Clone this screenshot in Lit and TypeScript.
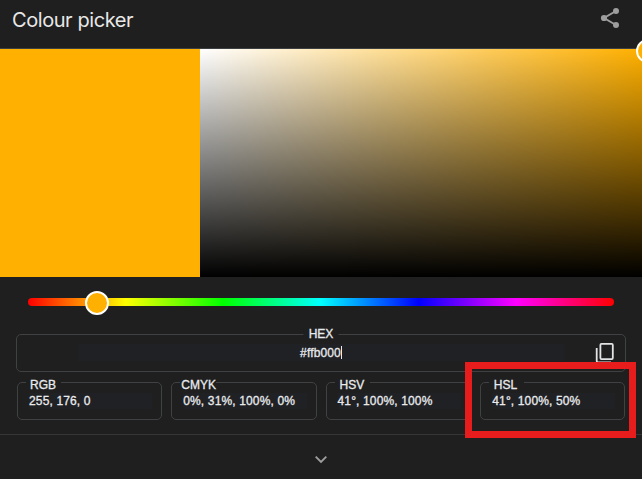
import { LitElement, html, css } from "lit";
import { customElement, property } from "lit/decorators.js";

@customElement("value-field")
class ValueField extends LitElement {
  @property() label = "";
  @property() value = "";

  static styles = css`
    :host {
      display: block;
      position: relative;
      box-sizing: border-box;
      height: 38px;
      border: 1px solid #404142;
      border-radius: 5px;
      padding: 10px 9px 0 11px;
      font: 12px/16px "Liberation Sans", Arial, sans-serif;
      letter-spacing: 0.14px;
      color: #e8eaed;
      -webkit-text-stroke: 0.3px #e8eaed;
    }
    .label {
      position: absolute;
      top: -5px;
      left: 8px;
      height: 14px;
      line-height: 15px;
      padding: 0 4px;
      min-width: 27px;
      background: #1f1f1f;
      letter-spacing: 0;
    }
    .value {
      height: 16px;
      background: #202124;
      white-space: nowrap;
    }
    :host([kind="cmyk"]) .label { padding: 0 0 0 1px; }
    :host([kind="hsl"]) .label { padding-left: 5px; min-width: 26px; }
    :host([kind="hsl"]) .value { text-indent: 0.5px; }
    :host([kind="hsv"]) .label { padding-left: 5px; min-width: 26px; }
    :host([kind="hex"]) { padding: 9px 61px 0; }
    :host([kind="hex"]) .label {
      top: -8px;
      left: 50%;
      transform: translateX(-50%);
      padding: 0 5px;
      min-width: 25px;
      text-align: center;
    }
    :host([kind="hex"]) .value {
      line-height: 18px;
      height: 17px;
      display: flex;
      justify-content: center;
    }
    .caret { display: none; }
    :host([kind="hex"]) .caret {
      display: block;
      width: 1px;
      height: 13px;
      margin-top: 2px;
      background: #e8eaed;
    }
    ::slotted(svg) {
      position: absolute;
      right: 9px;
      top: 7px;
    }
  `;

  render() {
    return html`<div class="value"><span>${this.value}</span><i class="caret"></i></div>
      <span class="label">${this.label}</span>
      <slot></slot>`;
  }
}

const FIELDS = [
  { kind: "rgb", label: "RGB", value: "255, 176, 0" },
  { kind: "cmyk", label: "CMYK", value: "0%, 31%, 100%, 0%" },
  { kind: "hsv", label: "HSV", value: "41°, 100%, 100%" },
  { kind: "hsl", label: "HSL", value: "41°, 100%, 50%" },
];

@customElement("app-root")
class AppRoot extends LitElement {
  static styles = css`
    :host {
      display: flex;
      flex-direction: column;
      position: relative;
      height: 479px;
      overflow: hidden;
      background: #1f1f1f;
      color: #e8e8e8;
    }
    header {
      box-sizing: border-box;
      height: 49px;
      display: flex;
      justify-content: space-between;
      padding: 6px 20px 0 12px;
      border-bottom: 1px solid #3c4043;
    }
    .title {
      margin: 0;
      font: 400 20px/28px "Inter", "Roboto", sans-serif;
      letter-spacing: -0.43px;
    }
    .share { display: block; }
    .stage {
      display: grid;
      grid-template-columns: 200px 1fr;
      height: 228px;
    }
    .swatch { background: #ffb000; }
    .field {
      position: relative;
      background: linear-gradient(to top, #000, rgba(0, 0, 0, 0)),
        linear-gradient(to right, #fff, #ffb000);
    }
    .knob {
      position: absolute;
      box-sizing: border-box;
      width: 24px;
      height: 24px;
      border: 2px solid #fff;
      border-radius: 50%;
      background: #ffb000;
    }
    .field .knob { right: -18px; top: -10px; }
    .hue {
      position: relative;
      height: 8px;
      margin: 21px 28px 28px;
      border-radius: 4px;
      background: linear-gradient(to right, #f00, #ff0 16.67%, #0f0 33.33%, #0ff 50%, #00f 66.67%, #f0f 83.33%, #f00);
    }
    .hue .knob { left: 57px; top: -7px; }
    .hex { margin: 0 16px; }
    .row {
      display: grid;
      grid-template-columns: repeat(4, 1fr);
      gap: 9px;
      margin: 10px 17px 14px;
    }
    footer {
      flex: 1;
      border-top: 1px solid #343536;
      display: flex;
      justify-content: center;
      padding-top: 20px;
    }
    .highlight {
      position: absolute;
      box-sizing: border-box;
      left: 465px;
      top: 362px;
      width: 171px;
      height: 76px;
      border: 7px solid #e71d1d;
    }
  `;

  render() {
    return html`
      <header>
        <h1 class="title">Colour picker</h1>
        <svg class="share" width="24" height="24" viewBox="0 0 24 24" fill="#9e9e9e" stroke="#9e9e9e">
          <path d="M18 5 6 12l12 7" fill="none" stroke-width="2" />
          <circle cx="18" cy="5" r="3" stroke="none" />
          <circle cx="6" cy="12" r="3.1" stroke="none" />
          <circle cx="18" cy="19" r="3" stroke="none" />
        </svg>
      </header>
      <div class="stage">
        <div class="swatch"></div>
        <div class="field"><div class="knob"></div></div>
      </div>
      <div class="hue"><div class="knob"></div></div>
      <value-field class="hex" kind="hex" label="HEX" value="#ffb000">
        <svg width="22" height="22" viewBox="0 0 22 22" fill="none" stroke="#e2e3e5" stroke-width="1.8">
          <rect x="6.4" y="1.9" width="12.4" height="15.2" rx="1" />
          <path d="M2.7 6v13q0 1.3 1.3 1.3H17" />
        </svg>
      </value-field>
      <div class="row">
        ${FIELDS.map(
          (f) => html`<value-field kind=${f.kind} label=${f.label} value=${f.value}></value-field>`
        )}
      </div>
      <footer>
        <svg width="16" height="10" viewBox="0 0 16 10" fill="none" stroke="#9e9e9e" stroke-width="1.9">
          <path d="m2.7 1.6 5.3 5.3 5.3-5.3" />
        </svg>
      </footer>
      <div class="highlight"></div>
    `;
  }
}
